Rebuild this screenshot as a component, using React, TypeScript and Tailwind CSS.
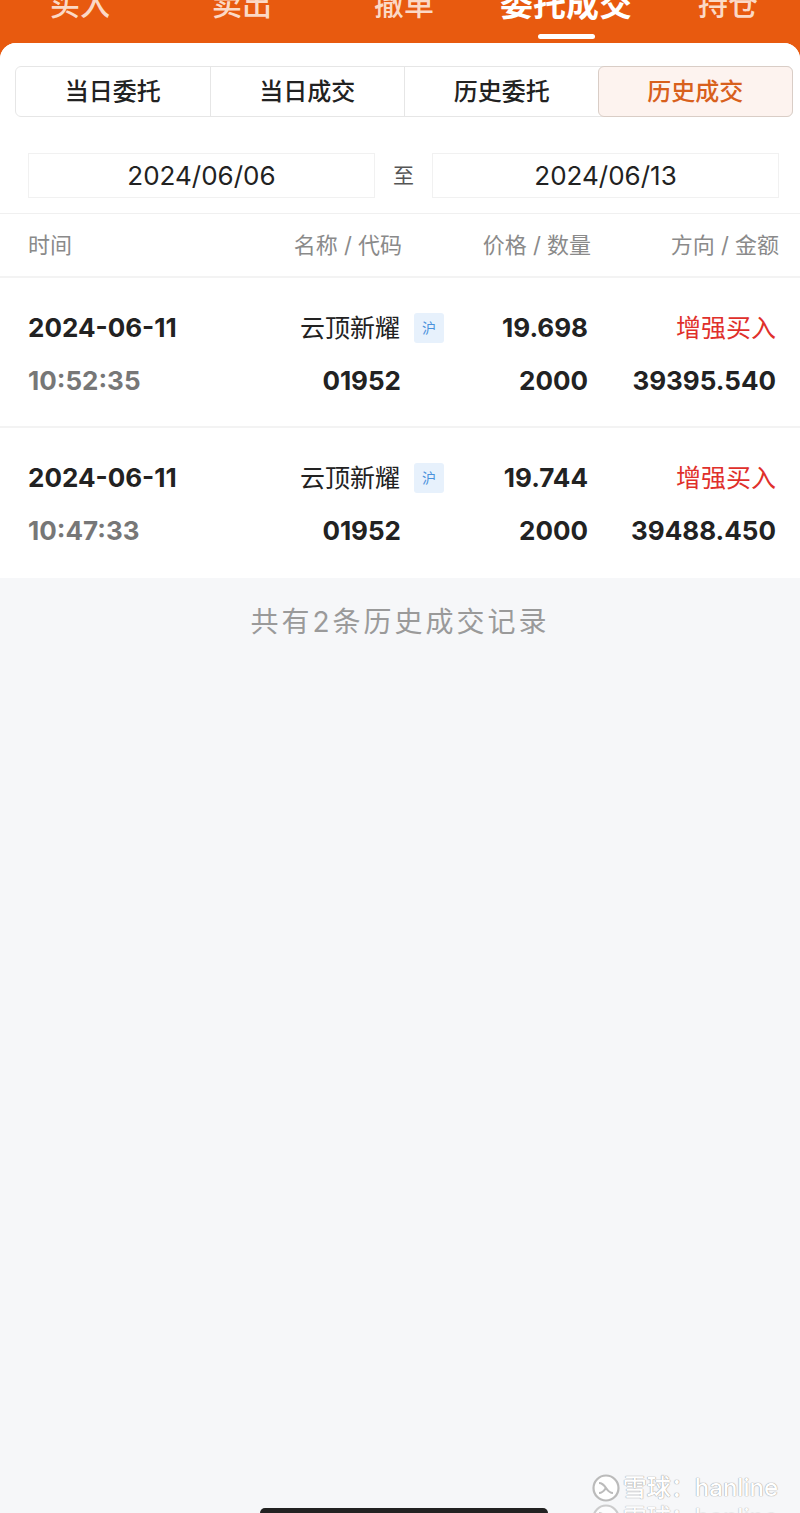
import React from 'react';

const font = "font-['Inter','Noto_Sans_CJK_SC',sans-serif]";

const topTabs = ['买入', '卖出', '撤单', '委托成交', '持仓'];
const subTabs = ['当日委托', '当日成交', '历史委托', '历史成交'];

const trades = [
  { date: '2024-06-11', time: '10:52:35', name: '云顶新耀', code: '01952', price: '19.698', qty: '2000', side: '增强买入', amount: '39395.540' },
  { date: '2024-06-11', time: '10:47:33', name: '云顶新耀', code: '01952', price: '19.744', qty: '2000', side: '增强买入', amount: '39488.450' },
];

function XueqiuLogo() {
  return (
    <svg width="30" height="30" viewBox="0 0 30 30" fill="none">
      <circle cx="15" cy="15" r="12.5" stroke="#bbb" strokeWidth="2.2" fill="#fff" />
      <path d="M8 10c3 0 5 2 7 5s4 5 7 5" stroke="#bbb" strokeWidth="2.2" fill="none" />
      <path d="M8 20c3 0 5-2 7-5" stroke="#bbb" strokeWidth="2.2" fill="none" />
    </svg>
  );
}

export default function App() {
  return (
    <div className={`${font} w-[800px] h-[1513px] bg-[#e85a0f] overflow-hidden flex flex-col relative`}>
      {/* top tabs, cut off by the top edge */}
      <div className="h-[43px] flex shrink-0 overflow-hidden -ml-px">
        {topTabs.map((t, i) => (
          <div key={t} className="w-[162px] shrink-0 flex flex-col items-center">
            <span
              className={`-mt-[12px] h-[32px] leading-[32px] ${
                i === 3 ? 'text-[33px] text-white font-semibold' : 'text-[30px] text-[#fbd9c6] font-medium'
              }`}
            >
              {t}
            </span>
            {i === 3 && <div className="mt-[14px] w-[57px] h-[5px] rounded-full bg-white" />}
          </div>
        ))}
      </div>

      <div className="flex-1 bg-[#f6f7f9] rounded-t-[16px] overflow-hidden flex flex-col">
        <div className="bg-white">
          {/* segmented control */}
          <div className="pt-[23px] px-[15px] pr-[7px]">
            <div className="flex h-[51px] rounded-[6px] border border-[#e6e6e6]">
              {subTabs.map((t, i) => (
                <div
                  key={t}
                  className={`flex-1 flex items-center justify-center text-[24px] font-medium ${
                    i === 3
                      ? 'bg-[#fdf3ef] text-[#d8601c] border border-[#d9cdc6] rounded-[6px] -m-px'
                      : 'text-[#222]'
                  } ${i === 1 || i === 2 ? 'border-l border-[#e6e6e6]' : ''}`}
                >
                  {t}
                </div>
              ))}
            </div>
          </div>

          {/* date range */}
          <div className="flex items-center px-[28px] pr-[21px] pt-[36px] pb-[15px] border-b border-[#f0f0f0]">
            <div className="flex-1 h-[45px] border border-[#f1f1f1] flex items-center justify-center text-[26px] text-[#222]">
              2024/06/06
            </div>
            <div className="w-[57px] text-center text-[21px] text-[#555]">至</div>
            <div className="flex-1 h-[45px] border border-[#f1f1f1] flex items-center justify-center text-[26px] text-[#222]">
              2024/06/13
            </div>
          </div>

          {/* header */}
          <div className="grid grid-cols-[232px_142px_189px_188px] pl-[28px] pr-[21px] h-[64px] items-center text-[22px] text-[#8a8a8a] border-b-2 border-[#f3f3f3]">
            <div>时间</div>
            <div className="text-right">名称 / 代码</div>
            <div className="text-right">价格 / 数量</div>
            <div className="text-right">方向 / 金额</div>
          </div>

          {/* rows */}
          {trades.map((r, idx) => (
            <div
              key={r.time}
              className={`grid grid-cols-[232px_142px_189px_185px] pl-[28px] pr-[24px] pt-[33px] h-[150px] ${
                idx === 0 ? 'border-b-2 border-[#f3f3f3]' : ''
              }`}
            >
              <div className="flex flex-col gap-[19px]">
                <span className="text-[26px] leading-[34px] font-bold text-[#222]">{r.date}</span>
                <span className="text-[26px] leading-[34px] font-bold text-[#777]">{r.time}</span>
              </div>
              <div className="flex flex-col gap-[19px] items-end">
                <span className="relative text-[25px] leading-[34px] text-[#222] pr-[2px]">
                  {r.name}
                  <span className="absolute left-[calc(100%+12px)] top-[2px] w-[30px] h-[30px] rounded-[3px] bg-[#e7f1fc] text-[#4b92dc] text-[14px] flex items-center justify-center">
                    沪
                  </span>
                </span>
                <span className="text-[26px] leading-[34px] font-bold text-[#222] pr-[1px]">{r.code}</span>
              </div>
              <div className="flex flex-col gap-[19px] items-end pr-[3px]">
                <span className="text-[26px] leading-[34px] font-bold text-[#222]">{r.price}</span>
                <span className="text-[26px] leading-[34px] font-bold text-[#222]">{r.qty}</span>
              </div>
              <div className="flex flex-col gap-[19px] items-end">
                <span className="text-[25px] leading-[34px] text-[#e0302b]">{r.side}</span>
                <span className="text-[26px] leading-[34px] font-bold text-[#222]">{r.amount}</span>
              </div>
            </div>
          ))}
        </div>

        <div className="pt-[23px] text-center text-[28px] tracking-[3px] text-[#9a9a9a]">共有2条历史成交记录</div>
      </div>

      {/* watermark */}
      <div className="absolute right-[22px] top-[1473px] flex flex-col items-start text-white [text-shadow:0_0_1px_#999,0_0_1px_#999]">
        <div className="flex items-center gap-[2px] h-[30px]">
          <XueqiuLogo />
          <span className="text-[24px] leading-[30px] font-medium">雪球：hanline</span>
        </div>
        <div className="flex items-center gap-[2px] h-[30px] opacity-70">
          <XueqiuLogo />
          <span className="text-[24px] leading-[30px] font-medium">雪球：hanline</span>
        </div>
      </div>

      {/* home indicator */}
      <div className="absolute left-[260px] top-[1508px] w-[288px] h-[10px] rounded-full bg-[#222]" />
    </div>
  );
}
